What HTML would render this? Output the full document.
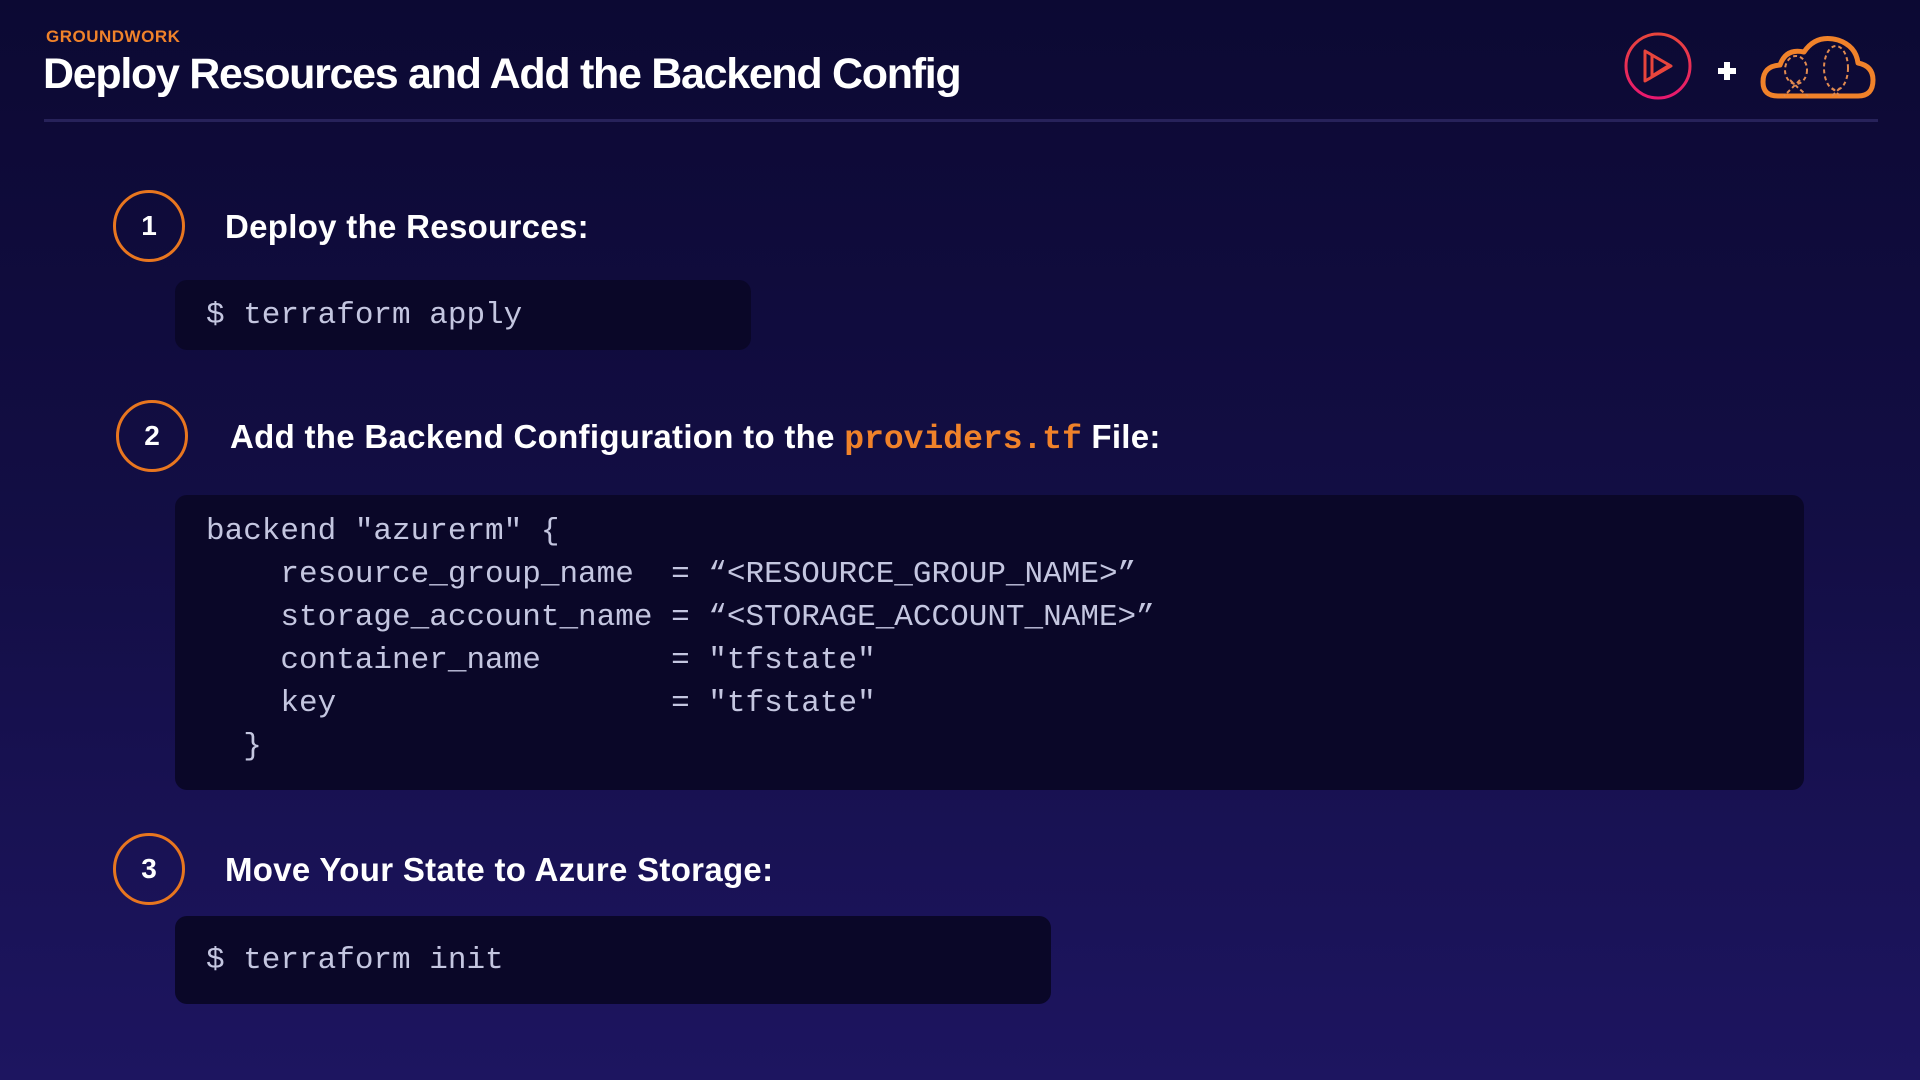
<!DOCTYPE html>
<html><head><meta charset="utf-8"><style>
html,body{margin:0;padding:0}
body{width:1920px;height:1080px;overflow:hidden;position:relative;font-family:"Liberation Sans",sans-serif;
background:linear-gradient(180deg,#0c0933 0%,#130e45 50%,#1d1560 100%);color:#fff}
.abs{position:absolute}
.gw{left:46px;top:27px;font-size:17px;font-weight:bold;color:#f0822a;letter-spacing:0.5px}
.title{left:43px;top:50px;font-size:43px;font-weight:bold;letter-spacing:-1.3px;white-space:nowrap}
.rule{left:44px;top:119px;width:1834px;height:3px;background:#27225a}
.circ{width:72px;height:72px;border:3px solid #e8761f;border-radius:50%;box-sizing:border-box;display:flex;align-items:center;justify-content:center;font-weight:bold;font-size:28px}
.h{font-size:33px;font-weight:bold;white-space:nowrap;letter-spacing:0.3px}
.box{background:#0a0728;border-radius:12px}
.code{font-family:"Liberation Mono",monospace;font-size:31px;color:#c4c6e0;white-space:pre;line-height:43px}
.or{color:#f0822a;font-family:"Liberation Mono",monospace;font-weight:bold;font-size:33px;letter-spacing:0px}
</style></head><body>
<div class="abs gw">GROUNDWORK</div>
<div class="abs title">Deploy Resources and Add the Backend Config</div>
<div class="abs rule"></div>

<svg class="abs" style="left:1620px;top:30px" width="260" height="72" viewBox="0 0 260 72">
<defs><linearGradient id="g" x1="0" y1="0" x2="0" y2="1"><stop offset="0" stop-color="#e8453c"/><stop offset="1" stop-color="#e8186f"/></linearGradient></defs>
<circle cx="38" cy="36" r="32" fill="none" stroke="url(#g)" stroke-width="3"/>
<path d="M25 21 L25 51 L51 36 Z M32 26 L32 46 L48 36" fill="none" stroke="#e8453c" stroke-width="3" stroke-linejoin="round"/>
<path d="M107 32v18M98 41h18" stroke="#fff" stroke-width="6"/>
<path d="M158 66 Q143 66 143 52 Q143 36 160 35 Q166 18 184 22 Q196 4 218 10 Q236 16 238 33 Q253 36 253 50 Q253 66 238 66 Z" fill="none" stroke="#f0822a" stroke-width="5" stroke-linejoin="round"/>
<g fill="none" stroke="#e08a50" stroke-width="2" stroke-dasharray="4 3">
<ellipse cx="176" cy="40" rx="11" ry="14"/><path d="M170 50 Q180 60 188 66 M180 50 Q170 60 164 66"/>
<ellipse cx="216" cy="38" rx="12" ry="22"/><path d="M212 58 l8 8 M220 58 l-8 8"/></g>
</svg>

<div class="abs circ" style="left:113px;top:190px">1</div>
<div class="abs h" style="left:225px;top:208px">Deploy the Resources:</div>
<div class="abs box" style="left:175px;top:280px;width:576px;height:70px"></div>
<div class="abs code" style="left:206px;top:294px">$ terraform apply</div>

<div class="abs circ" style="left:116px;top:400px">2</div>
<div class="abs h" style="left:230px;top:418px">Add the Backend Configuration to the <span class="or">providers.tf</span> File:</div>
<div class="abs box" style="left:175px;top:495px;width:1629px;height:295px"></div>
<div class="abs code" style="left:206px;top:510px">backend "azurerm" {
    resource_group_name  = “&lt;RESOURCE_GROUP_NAME&gt;”
    storage_account_name = “&lt;STORAGE_ACCOUNT_NAME&gt;”
    container_name       = "tfstate"
    key                  = "tfstate"
  }</div>

<div class="abs circ" style="left:113px;top:833px">3</div>
<div class="abs h" style="left:225px;top:851px">Move Your State to Azure Storage:</div>
<div class="abs box" style="left:175px;top:916px;width:876px;height:88px"></div>
<div class="abs code" style="left:206px;top:939px">$ terraform init</div>
</body></html>
